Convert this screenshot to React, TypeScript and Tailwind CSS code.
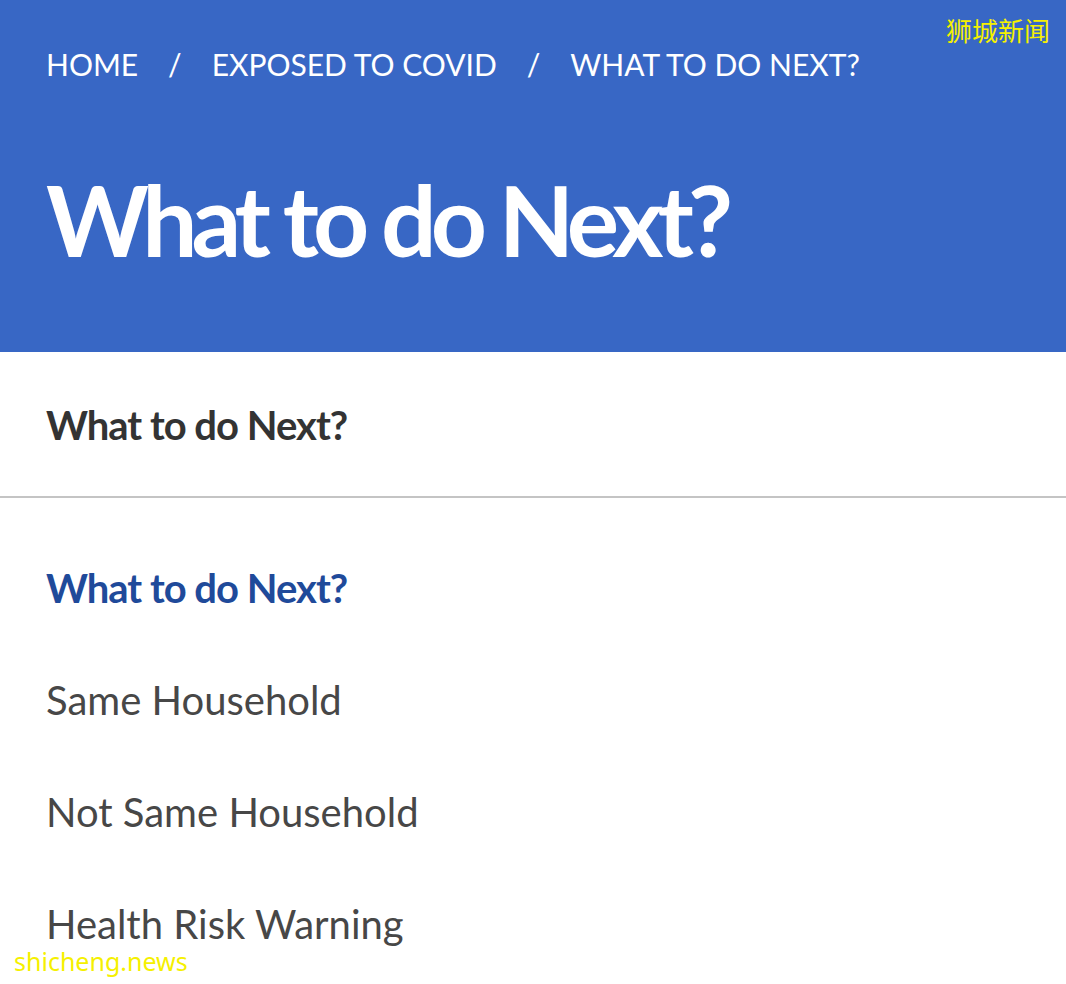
import React from "react"

const crumbs = ["HOME", "EXPOSED TO COVID", "WHAT TO DO NEXT?"]

const links = ["Same Household", "Not Same Household", "Health Risk Warning"]

export default function App() {
  return (
    <div
      className="relative w-[1066px] h-[984px] overflow-hidden bg-white"
      style={{ fontFamily: "Lato, 'Noto Sans', sans-serif" }}
    >
      <header className="h-[352px] bg-[#3867c5] px-[46px] pt-[44px] text-white">
        <nav className="flex items-center text-[30px] leading-[40px] font-normal">
          {crumbs.map((c, i) => (
            <React.Fragment key={c}>
              {i > 0 && <span className="px-[30px]">/</span>}
              <span>{c}</span>
            </React.Fragment>
          ))}
        </nav>
        <h1 className="mt-[80px] text-[98px] leading-[110px] font-bold tracking-[-6px]">
          What to do Next?
        </h1>
      </header>

      <div className="px-[46px] h-[146px] flex items-center border-b-2 border-[#c4c4c4]">
        <h2 className="text-[40px] font-bold text-[#333] tracking-[-1px] pt-[2px]">What to do Next?</h2>
      </div>

      <ul className="px-[46px] pt-[34px]">
        <li className="h-[112px] flex items-center text-[40px] font-bold text-[#1f4a9a] tracking-[-1px]">
          What to do Next?
        </li>
        {links.map((l) => (
          <li key={l} className="h-[112px] flex items-center text-[40px] text-[#474747]">
            {l}
          </li>
        ))}
      </ul>

      <div
        className="absolute top-[17px] right-[16px] text-[26px] leading-none text-[#f5f000]"
        style={{ fontFamily: "'Noto Sans CJK SC', sans-serif" }}
      >
        狮城新闻
      </div>
      <div
        className="absolute left-[14px] top-[949px] text-[25px] leading-none text-[#f5f000]"
        style={{ fontFamily: "'Noto Sans', sans-serif" }}
      >
        shicheng.news
      </div>
    </div>
  )
}
